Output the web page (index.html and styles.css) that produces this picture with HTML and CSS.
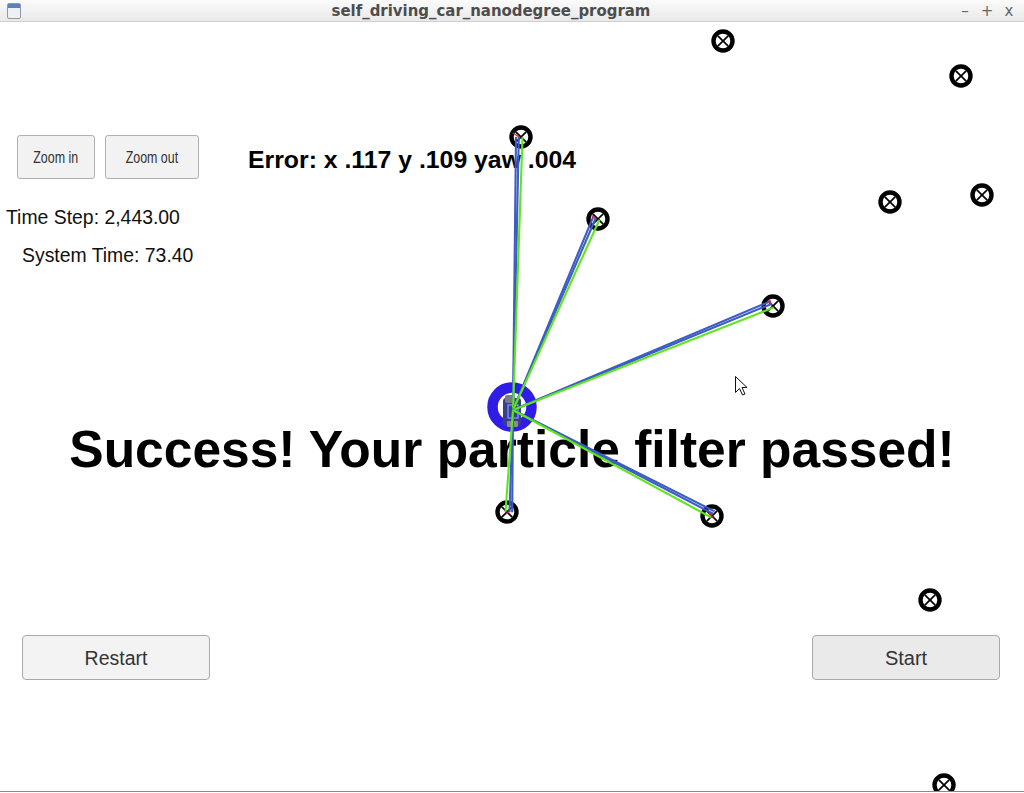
FILE: index.html
```html
<!DOCTYPE html>
<html lang="en">
<head>
<meta charset="utf-8">
<title>self_driving_car_nanodegree_program</title>
<link rel="stylesheet" href="styles.css">
</head>
<body>
<div class="window">
  <header class="titlebar">
    <span class="app-icon">
      <svg width="14" height="16" viewBox="0 0 14 16">
        <rect x="0.5" y="0.5" width="13" height="15" rx="1.5" fill="#eef0f3" stroke="#8e98a8"/>
        <rect x="1" y="1" width="12" height="4" fill="#5b7fbf"/>
      </svg>
    </span>
    <span class="title">self_driving_car_nanodegree_program</span>
    <span class="controls"><span>&#8211;</span><span>+</span><span>x</span></span>
  </header>

  <main class="canvas">
    <div class="toolbar">
      <button class="btn btn-zoom btn-zoom-in"><span class="narrow">Zoom in</span></button>
      <button class="btn btn-zoom btn-zoom-out"><span class="narrow">Zoom out</span></button>
      <div class="error">Error: x .117 y .109 yaw .004</div>
    </div>
    <div class="stat stat-step">Time Step: 2,443.00</div>
    <div class="stat stat-time">System Time: 73.40</div>
    <h1 class="success">Success! Your particle filter passed!</h1>
    <div class="actions">
      <button class="btn btn-big btn-restart">Restart</button>
      <button class="btn btn-big btn-start">Start</button>
    </div>

    <svg class="scene" width="1024" height="769" viewBox="0 22 1024 769">
      <defs>
        <g id="lm">
          <circle r="9.5" fill="#fff" stroke="#000" stroke-width="4.4"/>
          <line x1="-5.2" y1="-5.2" x2="5.2" y2="5.2" stroke="#000" stroke-width="1.7"/>
          <line x1="-5.2" y1="5.2" x2="5.2" y2="-5.2" stroke="#000" stroke-width="1.7"/>
        </g>
      </defs>

      <!-- landmarks -->
      <use href="#lm" x="723" y="41"/>
      <use href="#lm" x="961" y="76"/>
      <use href="#lm" x="521" y="137"/>
      <use href="#lm" x="598" y="219"/>
      <use href="#lm" x="890" y="202"/>
      <use href="#lm" x="982" y="195"/>
      <use href="#lm" x="773" y="306"/>
      <use href="#lm" x="507" y="512"/>
      <use href="#lm" x="712" y="516"/>
      <use href="#lm" x="930" y="600"/>
      <use href="#lm" x="944" y="785"/>

      <!-- car body -->
      <circle cx="512" cy="407" r="19.5" fill="none" stroke="#2f1de6" stroke-width="10.5"/>
      <rect x="503" y="398" width="18" height="28" rx="3" fill="#3a3f8a"/>
      <rect x="505" y="395" width="10" height="8" rx="2" fill="#7b7b86"/>
      <rect x="507" y="421" width="11" height="6" rx="1" fill="#8a8a92"/>
      <rect x="508" y="405" width="10" height="13" fill="none" stroke="#6f8cff" stroke-width="1.5"/>

      <!-- observation lines -->
      <g stroke-width="2.1" fill="none">
        <line x1="513" y1="410" x2="516" y2="136.9" stroke="#3d5cc4"/>
        <line x1="513" y1="410" x2="518.8" y2="136.9" stroke="#3d5cc4"/>
        <line x1="513" y1="410" x2="522.5" y2="137" stroke="#5ee61c"/>

        <line x1="513" y1="410" x2="593.2" y2="216.8" stroke="#3d5cc4"/>
        <line x1="513" y1="410" x2="595.8" y2="218" stroke="#3d5cc4"/>
        <line x1="513" y1="410" x2="599.4" y2="219.8" stroke="#5ee61c"/>

        <line x1="513" y1="410" x2="771" y2="301" stroke="#3d5cc4"/>
        <line x1="513" y1="410" x2="772" y2="303.7" stroke="#3d5cc4"/>
        <line x1="513" y1="410" x2="773.6" y2="307.6" stroke="#5ee61c"/>

        <line x1="513" y1="410" x2="512.2" y2="512.3" stroke="#3d5cc4"/>
        <line x1="513" y1="410" x2="509.5" y2="512.1" stroke="#3d5cc4"/>
        <line x1="513" y1="410" x2="505.5" y2="511.9" stroke="#5ee61c"/>

        <line x1="513" y1="410" x2="714.6" y2="511.4" stroke="#3d5cc4"/>
        <line x1="513" y1="410" x2="713.2" y2="513.8" stroke="#3d5cc4"/>
        <line x1="513" y1="410" x2="711.3" y2="517.5" stroke="#5ee61c"/>
      </g>

      <!-- predicted marks -->
      <g stroke="#e0213b" stroke-width="1.4">
        <line x1="513" y1="133" x2="519" y2="137"/>
        <line x1="591" y1="215" x2="596" y2="219"/>
        <line x1="768" y1="300" x2="772" y2="305"/>
        <line x1="506" y1="514" x2="510" y2="511"/>
        <line x1="709" y1="513" x2="713" y2="518"/>
      </g>

      <!-- mouse cursor -->
      <path d="M735.5 376.5 L735.5 392.5 L739.5 388.5 L742.5 395 L745 394 L742 387.5 L747 387.5 Z" fill="#fff" stroke="#111" stroke-width="1" stroke-linejoin="miter"/>
    </svg>
  </main>
  <div class="bottom-edge"></div>
</div>
</body>
</html>
```

FILE: styles.css
```css
html, body {
  margin: 0;
  padding: 0;
  background: #ffffff;
}

body {
  width: 1024px;
  height: 793px;
  overflow: hidden;
  font-family: "Liberation Sans", Arial, sans-serif;
}

.window {
  width: 1024px;
  height: 793px;
  display: flex;
  flex-direction: column;
}

/* ---------- title bar ---------- */
.titlebar {
  height: 22px;
  box-sizing: border-box;
  display: flex;
  align-items: center;
  background: linear-gradient(#fbfbfb, #e9e9e9);
  border-bottom: 1px solid #cfcfcf;
}

.app-icon {
  width: 14px;
  height: 16px;
  padding-left: 7px;
  margin-right: 7px;
  display: flex;
}

.title {
  flex: 1;
  text-align: center;
  font-family: "DejaVu Sans Condensed", "DejaVu Sans", sans-serif;
  font-stretch: condensed;
  font-weight: bold;
  font-size: 16.6px;
  color: #4d4d4d;
  line-height: 22px;
}

.controls {
  display: flex;
  padding-right: 4px;
}

.controls span {
  width: 22px;
  text-align: center;
  font-family: "DejaVu Sans", sans-serif;
  font-size: 15px;
  color: #666666;
  line-height: 22px;
}

/* ---------- canvas ---------- */
.canvas {
  position: relative;
  height: 769px;
  overflow: hidden;
  background: #ffffff;
}

.bottom-edge {
  height: 1px;
  border-top: 1px solid #8a8a8a;
  background: #ffffff;
}

.scene {
  position: absolute;
  left: 0;
  top: 0;
  z-index: 2;
  pointer-events: none;
}

.btn {
  box-sizing: border-box;
  margin: 0;
  padding: 0;
  border: 1px solid #b0b0b0;
  border-radius: 3px;
  background: #f2f2f2;
  color: #333333;
  font-family: "Liberation Sans", Arial, sans-serif;
  display: flex;
  align-items: center;
  justify-content: center;
}

.toolbar {
  display: flex;
  align-items: flex-start;
  gap: 10px;
  padding: 113px 0 0 17px;
}

.btn-zoom {
  height: 44px;
  font-size: 17px;
  overflow: hidden;
  padding-top: 2px;
}

.btn-zoom-in { width: 78px; }
.btn-zoom-out { width: 94px; }

.narrow {
  display: inline-block;
  transform: scaleX(0.73);
  white-space: nowrap;
}

.error {
  margin-left: 39px;
  margin-top: 11px;
  font-weight: bold;
  font-size: 24.8px;
  line-height: 28px;
  color: #000000;
  white-space: nowrap;
}

.stat {
  font-size: 19.4px;
  line-height: 22px;
  color: #111111;
  white-space: nowrap;
}

.stat-step {
  margin-top: 27px;
  padding-left: 6px;
}

.stat-time {
  margin-top: 16px;
  padding-left: 22px;
}

.success {
  margin: 153px 0 0 0;
  text-align: center;
  font-size: 51.5px;
  line-height: 60px;
  font-weight: bold;
  color: #000000;
  white-space: nowrap;
}

.actions {
  margin-top: 155.7px;
  display: flex;
  justify-content: space-between;
  padding: 0 24px 0 22px;
}

.btn-big {
  width: 188px;
  height: 45px;
  border-radius: 4px;
  border-color: #a9a9a9;
  padding-top: 3px;
}

.btn-restart {
  font-size: 19.5px;
  background: #f3f3f3;
}

.btn-start {
  font-size: 20px;
  background: #eaeaea;
}
```
